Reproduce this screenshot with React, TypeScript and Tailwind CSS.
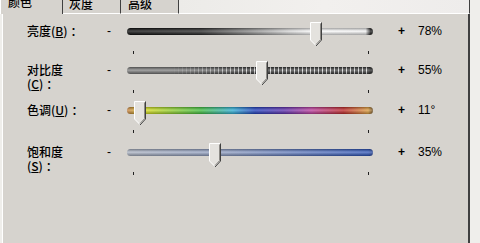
import React from 'react';

interface SliderRow {
  label: string;
  key: string;
  wrap?: boolean;
  value: number;
  text: string;
  track: string;
  height: string;
}

const rows: SliderRow[] = [
  {
    label: '亮度',
    key: 'B',
    value: 0.78,
    text: '78%',
    height: 'h-[39px]',
    track:
      'bg-[linear-gradient(to_bottom,rgba(0,0,0,0.35),rgba(255,255,255,0.25)_45%,rgba(0,0,0,0.35)),linear-gradient(to_right,#0c0c0c_0%,#2a2a2a_30%,#8a8a8a_50%,#dadada_66%,#ffffff_76%,#f6f6f6_97%,#1a1a1a_99%)]',
  },
  {
    label: '对比度',
    key: 'C',
    wrap: true,
    value: 0.55,
    text: '55%',
    height: 'h-[40px]',
    track:
      'bg-[linear-gradient(to_bottom,rgba(0,0,0,0.35),rgba(255,255,255,0.3)_45%,rgba(0,0,0,0.35)),linear-gradient(to_right,#7a7a7a_0%,#7a7a7a_18%,rgba(122,122,122,0)_50%,rgba(0,0,0,0)_98%,#1a1a1a_99%),repeating-linear-gradient(to_right,#3a3a3a_0_3px,#e6e6e6_3px_4px)]',
  },
  {
    label: '色调',
    key: 'U',
    value: 0.03,
    text: '11°',
    height: 'h-[42px]',
    track:
      'bg-[linear-gradient(to_bottom,rgba(0,0,0,0.3),rgba(255,255,255,0.25)_45%,rgba(0,0,0,0.3)),linear-gradient(to_right,#c88040_0%,#d8e020_8%,#40c040_30%,#30b0d8_43%,#2040c0_52%,#6030b0_64%,#c040a0_75%,#c02828_88%,#e0a040_98%,#6a4a20_100%)]',
  },
  {
    label: '饱和度',
    key: 'S',
    wrap: true,
    value: 0.35,
    text: '35%',
    height: 'h-[42px]',
    track:
      'bg-[linear-gradient(to_bottom,rgba(0,0,0,0.3),rgba(255,255,255,0.3)_45%,rgba(0,0,0,0.3)),linear-gradient(to_right,#a8b0c0_0%,#8a9ac0_40%,#2850b8_98%,#1c3a90_100%)]',
  },
];

function Thumb({ left }: { left: number }) {
  return (
    <svg
      className="absolute top-[3px]"
      style={{ left }}
      width="12"
      height="25"
      viewBox="0 0 12 25"
    >
      <path d="M0.5 0.5 H11.5 V18 L6 24 L0.5 18 Z" fill="#e4e2de" />
      <path d="M0.5 18 V0.5 H11" fill="none" stroke="#ffffff" />
      <path d="M0.5 18 L6 23.5" fill="none" stroke="#ffffff" />
      <path d="M11.5 0.5 V18 L6 24" fill="none" stroke="#404040" />
      <path d="M10.5 1.5 V17.6 L6 22.5" fill="none" stroke="#8c8a86" />
    </svg>
  );
}

function Row({ row }: { row: SliderRow }) {
  const centre = 6 + row.value * 235;
  return (
    <div className={`flex ${row.height}`}>
      <div className="w-[80px] pt-[5px] leading-[14px] font-medium">
        {row.label}
        {row.wrap && <br />}
        (<span className="underline underline-offset-1">{row.key}</span>)<span className="ml-[3px]">：</span>
      </div>
      <div className="w-[20px] pt-[6px] leading-[13px] font-['Liberation_Sans',sans-serif]">-</div>
      <div className="relative w-[246px] h-full">
        <div className={`mt-[9px] h-[7px] rounded-full ${row.track}`} />
        <Thumb left={Math.round(centre - 6)} />
        <div className="absolute left-[6px] top-[32px] w-px h-[3px] bg-[#202020]" />
        <div className="absolute left-[241px] top-[32px] w-px h-[3px] bg-[#202020]" />
      </div>
      <div className="flex pt-[6px] leading-[13px] font-['Liberation_Sans',sans-serif]">
        <span className="pl-[25px] w-[45px] font-bold">+</span>
        <span>{row.text}</span>
      </div>
    </div>
  );
}

export default function App() {
  return (
    <div className="w-[480px] h-[243px] overflow-hidden bg-[#efeeeb] text-[12px] text-black font-['Noto_Sans_CJK_SC','Liberation_Sans',sans-serif]">
      <div className="flex h-[14px] overflow-hidden">
        <div className="w-[63px] pl-[7px] flex items-end pb-[6px] leading-[12px] font-medium bg-[#d6d3ce] border-l border-white border-r border-r-[#404040]">
          颜色
        </div>
        <div className="w-[58px] pl-[6px] flex items-end pb-[3px] leading-[12px] font-medium bg-[#d6d3ce] border-r border-r-[#404040] border-b border-b-white">
          灰度
        </div>
        <div className="w-[58px] pl-[7px] flex items-end pb-[3px] leading-[12px] font-medium bg-[#d6d3ce] border-r border-r-[#404040] border-b border-b-white">
          高级
        </div>
        <div className="w-[291px] bg-[linear-gradient(to_right,#ecebe8,#f2f0ee,#eeeceb)] border-b border-b-white border-r border-r-[#404040]" />
      </div>
      <div className="ml-[2px] w-[468px] h-[229px] bg-[#d6d3ce] border-l border-white border-r-2 border-r-[#404040] pl-[24px] pt-[5px]">
        {rows.map((r) => (
          <Row key={r.key} row={r} />
        ))}
      </div>
    </div>
  );
}
